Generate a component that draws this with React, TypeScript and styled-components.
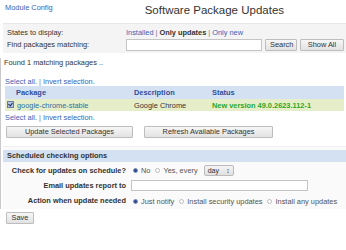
import React from "react";
import styled, { createGlobalStyle } from "styled-components";

const GlobalStyle = createGlobalStyle`
  html, body { margin: 0; padding: 0; background: #fff; }
  body {
    font-family: "Liberation Sans", Arial, sans-serif;
    font-size: 7.4px;
    color: #333;
  }
`;

const Page = styled.div`
  width: 346px;
  height: 250px;
  overflow: hidden;
`;

const Header = styled.div`
  display: flex;
  align-items: flex-start;
  height: 23px;
`;

const Link = styled.a<{ $bold?: boolean }>`
  color: #3a62b8;
  text-decoration: none;
  font-weight: ${(p) => (p.$bold ? 700 : 400)};
  cursor: pointer;
`;

const TopLink = styled(Link)`
  padding: 3px 0 0 5px;
  line-height: 9px;
`;

const Title = styled.h1`
  margin: 3px 0 0 92px;
  font-size: 11.5px;
  line-height: 14px;
  font-weight: 400;
  color: #333;
`;

const Band = styled.div`
  margin-left: 3px;
  background: #f4f4f4;
  border-top: 1px solid #e6e6e6;
  padding: 3px 0 1px;
  display: grid;
  grid-template-columns: 123px 1fr;
  align-items: center;
`;

const BandLabel = styled.div<{ $h: number }>`
  padding-left: 4px;
  height: ${(p) => p.$h}px;
  line-height: ${(p) => p.$h}px;
`;

const BandValue = styled.div<{ $h: number }>`
  display: flex;
  align-items: center;
  height: ${(p) => p.$h}px;
  gap: 3px;
`;

const Sep = styled.span`
  color: #8a7a7a;
  margin: 0 2px;
`;

const Strong = styled.b`
  color: #333;
`;

const TextInput = styled.input<{ $w: number; $h?: number }>`
  box-sizing: border-box;
  width: ${(p) => p.$w}px;
  height: ${(p) => p.$h ?? 12}px;
  border: 1px solid #c4c4c4;
  background: #fff;
  padding: 0 2px;
  font: inherit;
`;

const Button = styled.button<{ $w?: number }>`
  box-sizing: border-box;
  ${(p) => (p.$w ? `width: ${p.$w}px;` : "")}
  height: 12px;
  padding: 0 4px;
  border: 1px solid #bdbdbd;
  border-radius: 1px;
  background: linear-gradient(#f6f6f6, #e2e2e2);
  font: inherit;
  color: #333;
  line-height: 10px;
`;

const Main = styled.div`
  border-left: 1px solid #c9c9c9;
  margin-top: 5px;
`;

const Found = styled.div`
  padding-left: 3px;
  line-height: 9px;
`;

const SelectLinks = styled.div<{ $top: number }>`
  padding-left: 4px;
  margin-top: ${(p) => p.$top}px;
  line-height: 9px;
`;

const Table = styled.table`
  margin: 0 0 0 4px;
  width: 339px;
  border-collapse: collapse;
`;

const HeadRow = styled.tr`
  background: #d4e1f3;
`;

const Th = styled.th<{ $w?: number; $indent?: number }>`
  text-align: left;
  color: #2f4f9c;
  font-weight: 700;
  height: 13px;
  padding: 0 0 0 ${(p) => p.$indent ?? 0}px;
  ${(p) => (p.$w ? `width: ${p.$w}px;` : "")}
`;

const DataRow = styled.tr`
  background: #e5eec9;
`;

const Td = styled.td<{ $green?: boolean }>`
  height: 12px;
  padding: 0;
  color: ${(p) => (p.$green ? "#2aa82a" : "#333")};
  font-weight: ${(p) => (p.$green ? 700 : 400)};
`;

const PkgCell = styled.div`
  display: flex;
  align-items: center;
  gap: 3px;
  padding-left: 2px;
`;

const CheckBox = styled.span`
  width: 5px;
  height: 5px;
  border: 1px solid #6a7ca6;
  background: #b4c6e6;
  position: relative;
  margin-top: -2px;
  &::after {
    content: "";
    position: absolute;
    left: 1px;
    top: 0;
    width: 2px;
    height: 3px;
    border: solid #1d2d55;
    border-width: 0 1px 1px 0;
    transform: rotate(40deg);
  }
`;

const PkgLink = styled(Link)`
  color: #2a6ea0;
`;

const ButtonRow = styled.div`
  display: flex;
  gap: 11px;
  padding: 4px 0 0 5px;
`;

const Section = styled.div`
  margin: 8px 0 0 2px;
  border-top: 1px solid #efefef;
  background: #fafafa;
  padding: 3px 0 0;
`;

const SectionHead = styled.div`
  background: #d4e1f3;
  font-weight: 700;
  color: #333;
  height: 12px;
  line-height: 12px;
  padding-left: 4px;
`;

const Form = styled.div`
  display: grid;
  grid-template-columns: 123px 1fr;
  column-gap: 5px;
  margin-top: 1px;
`;

const FormLabel = styled.div<{ $h: number }>`
  text-align: right;
  font-weight: 700;
  height: ${(p) => p.$h}px;
  line-height: ${(p) => p.$h}px;
  white-space: nowrap;
`;

const FormValue = styled.div<{ $h: number }>`
  display: flex;
  align-items: center;
  height: ${(p) => p.$h}px;
  white-space: nowrap;
  color: #555;
`;

const Radio = styled.span<{ $on?: boolean }>`
  box-sizing: border-box;
  width: 5px;
  height: 5px;
  border-radius: 50%;
  border: 1px solid ${(p) => (p.$on ? "#7b8fba" : "#bbb")};
  background: ${(p) => (p.$on ? "#2c4a8c" : "#fff")};
  margin: 0 3px 0 2px;
`;

const Choice = styled.span`
  display: inline-flex;
  align-items: center;
  margin-right: 3px;
`;

const Select = styled.span`
  box-sizing: border-box;
  display: inline-flex;
  align-items: center;
  justify-content: space-between;
  width: 30px;
  height: 11px;
  margin-left: 3px;
  padding: 0 3px;
  border: 1px solid #bbb;
  border-radius: 2px;
  background: linear-gradient(#f4f4f4, #e0e0e0);
  color: #333;
  font-size: 7px;
`;

const SaveRow = styled.div`
  padding: 3px 0 0 6px;
`;

export default function App() {
  return (
    <Page>
      <GlobalStyle />
      <Header>
        <TopLink>Module Config</TopLink>
        <Title>Software Package Updates</Title>
      </Header>
      <Band>
        <BandLabel $h={11}>States to display:</BandLabel>
        <BandValue $h={11}>
          <span>
            <Link>Installed</Link>
            <Sep>|</Sep>
            <Strong>Only updates</Strong>
            <Sep>|</Sep>
            <Link>Only new</Link>
          </span>
        </BandValue>
        <BandLabel $h={14}>Find packages matching:</BandLabel>
        <BandValue $h={14}>
          <TextInput $w={136} />
          <Button $w={32}>Search</Button>
          <Button $w={44}>Show All</Button>
        </BandValue>
      </Band>
      <Main>
        <Found>Found 1 matching packages ..</Found>
        <SelectLinks $top={10}>
          <Link>Select all.</Link>
          <Sep>|</Sep>
          <Link>Invert selection.</Link>
        </SelectLinks>
        <Table>
          <thead>
            <HeadRow>
              <Th $w={118} $indent={11}>Package</Th>
              <Th $w={78}>Description</Th>
              <Th>Status</Th>
            </HeadRow>
          </thead>
          <tbody>
            <DataRow>
              <Td>
                <PkgCell>
                  <CheckBox />
                  <PkgLink>google-chrome-stable</PkgLink>
                </PkgCell>
              </Td>
              <Td>Google Chrome</Td>
              <Td $green>New version 49.0.2623.112-1</Td>
            </DataRow>
          </tbody>
        </Table>
        <SelectLinks $top={2}>
          <Link>Select all.</Link>
          <Sep>|</Sep>
          <Link>Invert selection.</Link>
        </SelectLinks>
        <ButtonRow>
          <Button $w={127}>Update Selected Packages</Button>
          <Button $w={129}>Refresh Available Packages</Button>
        </ButtonRow>
        <Section>
          <SectionHead>Scheduled checking options</SectionHead>
          <Form>
            <FormLabel $h={15}>Check for updates on schedule?</FormLabel>
            <FormValue $h={15}>
              <Choice>
                <Radio $on />
                No
              </Choice>
              <Choice>
                <Radio />
                Yes, every
              </Choice>
              <Select>
                day<span>&#x2195;</span>
              </Select>
            </FormValue>
            <FormLabel $h={15}>Email updates report to</FormLabel>
            <FormValue $h={15}>
              <TextInput $w={177} $h={11} />
            </FormValue>
            <FormLabel $h={16}>Action when update needed</FormLabel>
            <FormValue $h={16}>
              <Choice>
                <Radio $on />
                Just notify
              </Choice>
              <Choice>
                <Radio />
                Install security updates
              </Choice>
              <Choice>
                <Radio />
                Install any updates
              </Choice>
            </FormValue>
          </Form>
        </Section>
      </Main>
      <SaveRow>
        <Button $w={28}>Save</Button>
      </SaveRow>
    </Page>
  );
}
